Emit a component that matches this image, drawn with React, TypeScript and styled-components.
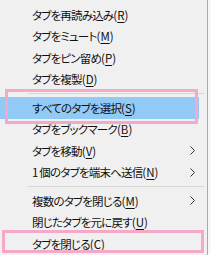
import React from 'react'
import styled, { createGlobalStyle } from 'styled-components'

const GlobalStyle = createGlobalStyle`
  html, body {
    margin: 0;
    padding: 0;
    background: #f7f7f7;
  }
  body {
    font-family: "Noto Sans CJK JP", "Noto Sans", sans-serif;
  }
`

const Page = styled.div`
  width: 211px;
  height: 255px;
  overflow: hidden;
  display: flex;
`

const Menu = styled.div`
  width: 208px;
  height: 255px;
  background: #f0f0f0;
  border-right: 1px solid #a9a9a9;
  padding-top: 4px;
  box-sizing: border-box;
  display: flex;
  flex-direction: column;
`

const Row = styled.div<{ $active?: boolean }>`
  position: relative;
  height: 21.5px;
  width: 199px;
  flex-shrink: 0;
  display: flex;
  align-items: center;
  padding-left: 32px;
  padding-right: 4px;
  box-sizing: border-box;
  background: ${(p) => (p.$active ? '#91c9f7' : 'transparent')};
  color: #111;
  font-size: 11.5px;
  letter-spacing: -0.8px;
  font-feature-settings: "palt";
  white-space: nowrap;
`

const Label = styled.span`
  flex: 1;
`

const Hint = styled.span`
  letter-spacing: 0;
`

const Key = styled.span`
  text-decoration: underline;
  text-underline-offset: 2px;
`

const Arrow = styled.svg`
  width: 5px;
  height: 9px;
`

const Separator = styled.div`
  height: 7px;
  flex-shrink: 0;
  display: flex;
  align-items: center;
  padding-left: 28px;
  padding-right: 3px;
  &::after {
    content: '';
    flex: 1;
    height: 1px;
    background: #d7d7d7;
  }
`

// pink annotation frame drawn over a row
const Marker = styled.div<{ $top: number; $bottom: number; $left: number; $width: number }>`
  position: absolute;
  top: ${(p) => p.$top}px;
  bottom: ${(p) => p.$bottom}px;
  left: ${(p) => p.$left}px;
  width: ${(p) => p.$width}px;
  border: 3px solid #f5a9c8;
  box-sizing: border-box;
  pointer-events: none;
`

type Item = {
  text: string
  key: string
  sub?: boolean
  active?: boolean
  marker?: { top: number; bottom: number; left: number; width: number }
} | 'sep'

const items: Item[] = [
  { text: 'タブを再読み込み', key: 'R' },
  { text: 'タブをミュート', key: 'M' },
  { text: 'タブをピン留め', key: 'P' },
  { text: 'タブを複製', key: 'D' },
  'sep',
  {
    text: 'すべてのタブを選択', key: 'S', active: true,
    marker: { top: -8, bottom: -5, left: 5, width: 193 },
  },
  { text: 'タブをブックマーク', key: 'B' },
  { text: 'タブを移動', key: 'V', sub: true },
  { text: '1 個のタブを端末へ送信', key: 'N', sub: true },
  'sep',
  { text: '複数のタブを閉じる', key: 'M', sub: true },
  { text: '閉じたタブを元に戻す', key: 'U' },
  {
    text: 'タブを閉じる', key: 'C',
    marker: { top: -3, bottom: 2, left: 2, width: 202 },
  },
]

const ChevronRight = () => (
  <Arrow viewBox="0 0 5 9">
    <polyline points="0.5,0.5 4.5,4.5 0.5,8.5" fill="none" stroke="#333" strokeWidth="1" />
  </Arrow>
)

const App: React.FC = () => (
  <Page>
    <GlobalStyle />
    <Menu>
      {items.map((item, i) => (item === 'sep'
        ? <Separator key={i} />
        : (
          <Row key={i} $active={item.active}>
            <Label>
              {item.text}
              <Hint>(<Key>{item.key}</Key>)</Hint>
            </Label>
            {item.sub && <ChevronRight />}
            {item.marker && (
              <Marker
                $top={item.marker.top}
                $bottom={item.marker.bottom}
                $left={item.marker.left}
                $width={item.marker.width}
              />
            )}
          </Row>
        )))}
    </Menu>
  </Page>
)

export default App
